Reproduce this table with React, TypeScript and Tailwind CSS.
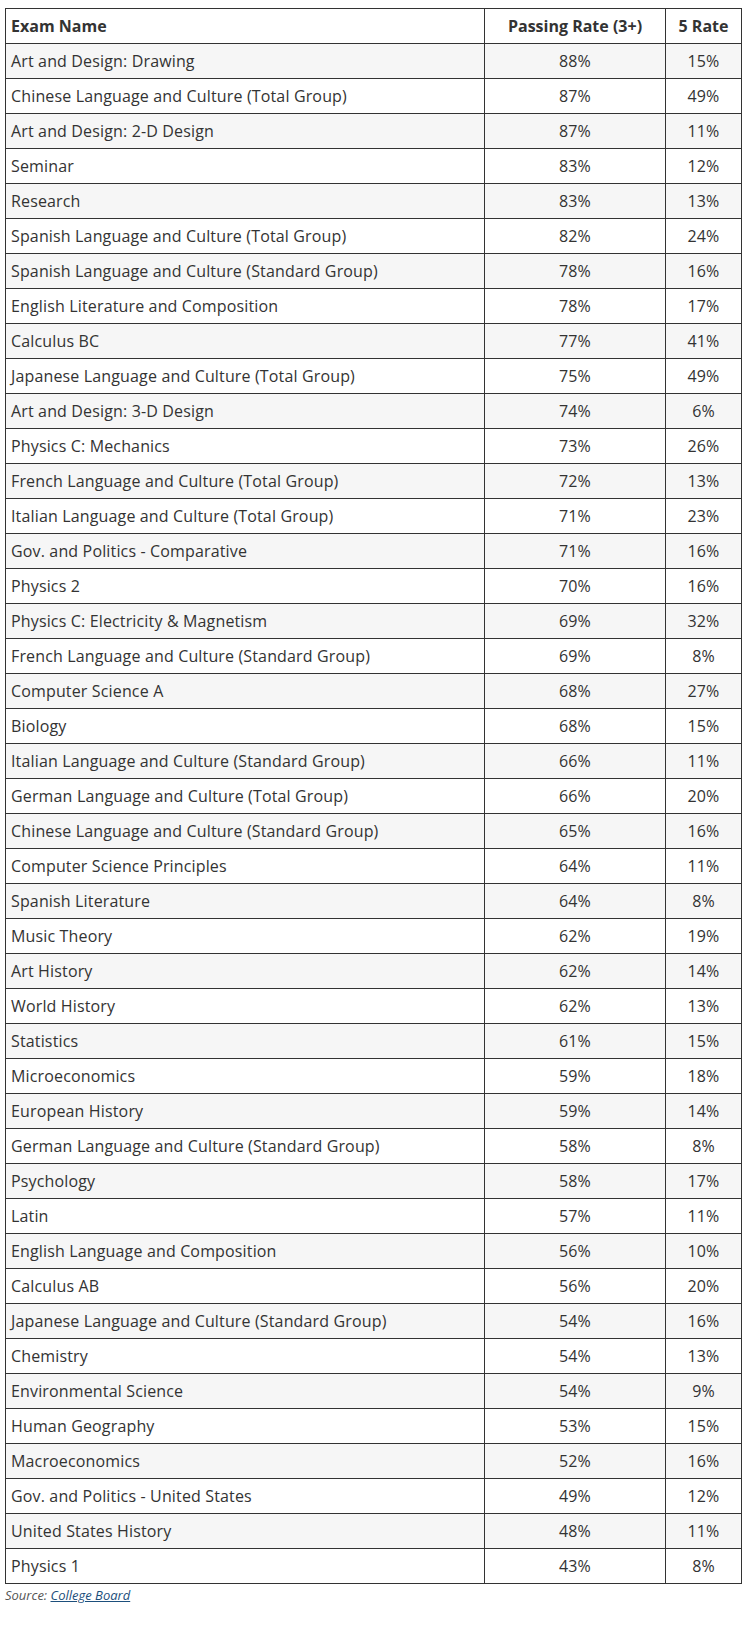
const rows: [string, string, string][] = [
  ['Art and Design: Drawing', '88%', '15%'],
  ['Chinese Language and Culture (Total Group)', '87%', '49%'],
  ['Art and Design: 2-D Design', '87%', '11%'],
  ['Seminar', '83%', '12%'],
  ['Research', '83%', '13%'],
  ['Spanish Language and Culture (Total Group)', '82%', '24%'],
  ['Spanish Language and Culture (Standard Group)', '78%', '16%'],
  ['English Literature and Composition', '78%', '17%'],
  ['Calculus BC', '77%', '41%'],
  ['Japanese Language and Culture (Total Group)', '75%', '49%'],
  ['Art and Design: 3-D Design', '74%', '6%'],
  ['Physics C: Mechanics', '73%', '26%'],
  ['French Language and Culture (Total Group)', '72%', '13%'],
  ['Italian Language and Culture (Total Group)', '71%', '23%'],
  ['Gov. and Politics - Comparative', '71%', '16%'],
  ['Physics 2', '70%', '16%'],
  ['Physics C: Electricity & Magnetism', '69%', '32%'],
  ['French Language and Culture (Standard Group)', '69%', '8%'],
  ['Computer Science A', '68%', '27%'],
  ['Biology', '68%', '15%'],
  ['Italian Language and Culture (Standard Group)', '66%', '11%'],
  ['German Language and Culture (Total Group)', '66%', '20%'],
  ['Chinese Language and Culture (Standard Group)', '65%', '16%'],
  ['Computer Science Principles', '64%', '11%'],
  ['Spanish Literature', '64%', '8%'],
  ['Music Theory', '62%', '19%'],
  ['Art History', '62%', '14%'],
  ['World History', '62%', '13%'],
  ['Statistics', '61%', '15%'],
  ['Microeconomics', '59%', '18%'],
  ['European History', '59%', '14%'],
  ['German Language and Culture (Standard Group)', '58%', '8%'],
  ['Psychology', '58%', '17%'],
  ['Latin', '57%', '11%'],
  ['English Language and Composition', '56%', '10%'],
  ['Calculus AB', '56%', '20%'],
  ['Japanese Language and Culture (Standard Group)', '54%', '16%'],
  ['Chemistry', '54%', '13%'],
  ['Environmental Science', '54%', '9%'],
  ['Human Geography', '53%', '15%'],
  ['Macroeconomics', '52%', '16%'],
  ['Gov. and Politics - United States', '49%', '12%'],
  ['United States History', '48%', '11%'],
  ['Physics 1', '43%', '8%'],
]

const App = () => {
  return (
    <div className="bg-white px-[5px] pt-[8px] text-[#333] font-['Open_Sans',sans-serif]">
      <table className="w-[736px] table-fixed border-collapse border border-[#333] text-[16px]">
        <colgroup>
          <col className="w-[479px]" />
          <col className="w-[181px]" />
          <col className="w-[76px]" />
        </colgroup>
        <thead>
          <tr className="h-[35px] bg-white">
            <th className="border border-[#333] px-[5px] text-left font-bold">Exam Name</th>
            <th className="border border-[#333] px-[5px] text-center font-bold">Passing Rate (3+)</th>
            <th className="border border-[#333] px-[5px] text-center font-bold">5 Rate</th>
          </tr>
        </thead>
        <tbody className="tracking-[0.15px]">
          {rows.map(([name, pass, five], i) => (
            <tr key={name} className={i % 2 === 0 ? 'h-[35px] bg-[#f6f6f6]' : 'h-[35px] bg-white'}>
              <td className="border border-[#333] px-[5px] text-left">{name}</td>
              <td className="border border-[#333] px-[5px] text-center">{pass}</td>
              <td className="border border-[#333] px-[5px] text-center">{five}</td>
            </tr>
          ))}
        </tbody>
      </table>
      <p className="mt-[2px] text-[13px] italic text-[#555]">
        Source: <a href="#" className="text-[#1d4f7c] underline">College Board</a>
      </p>
    </div>
  )
}

export default App
